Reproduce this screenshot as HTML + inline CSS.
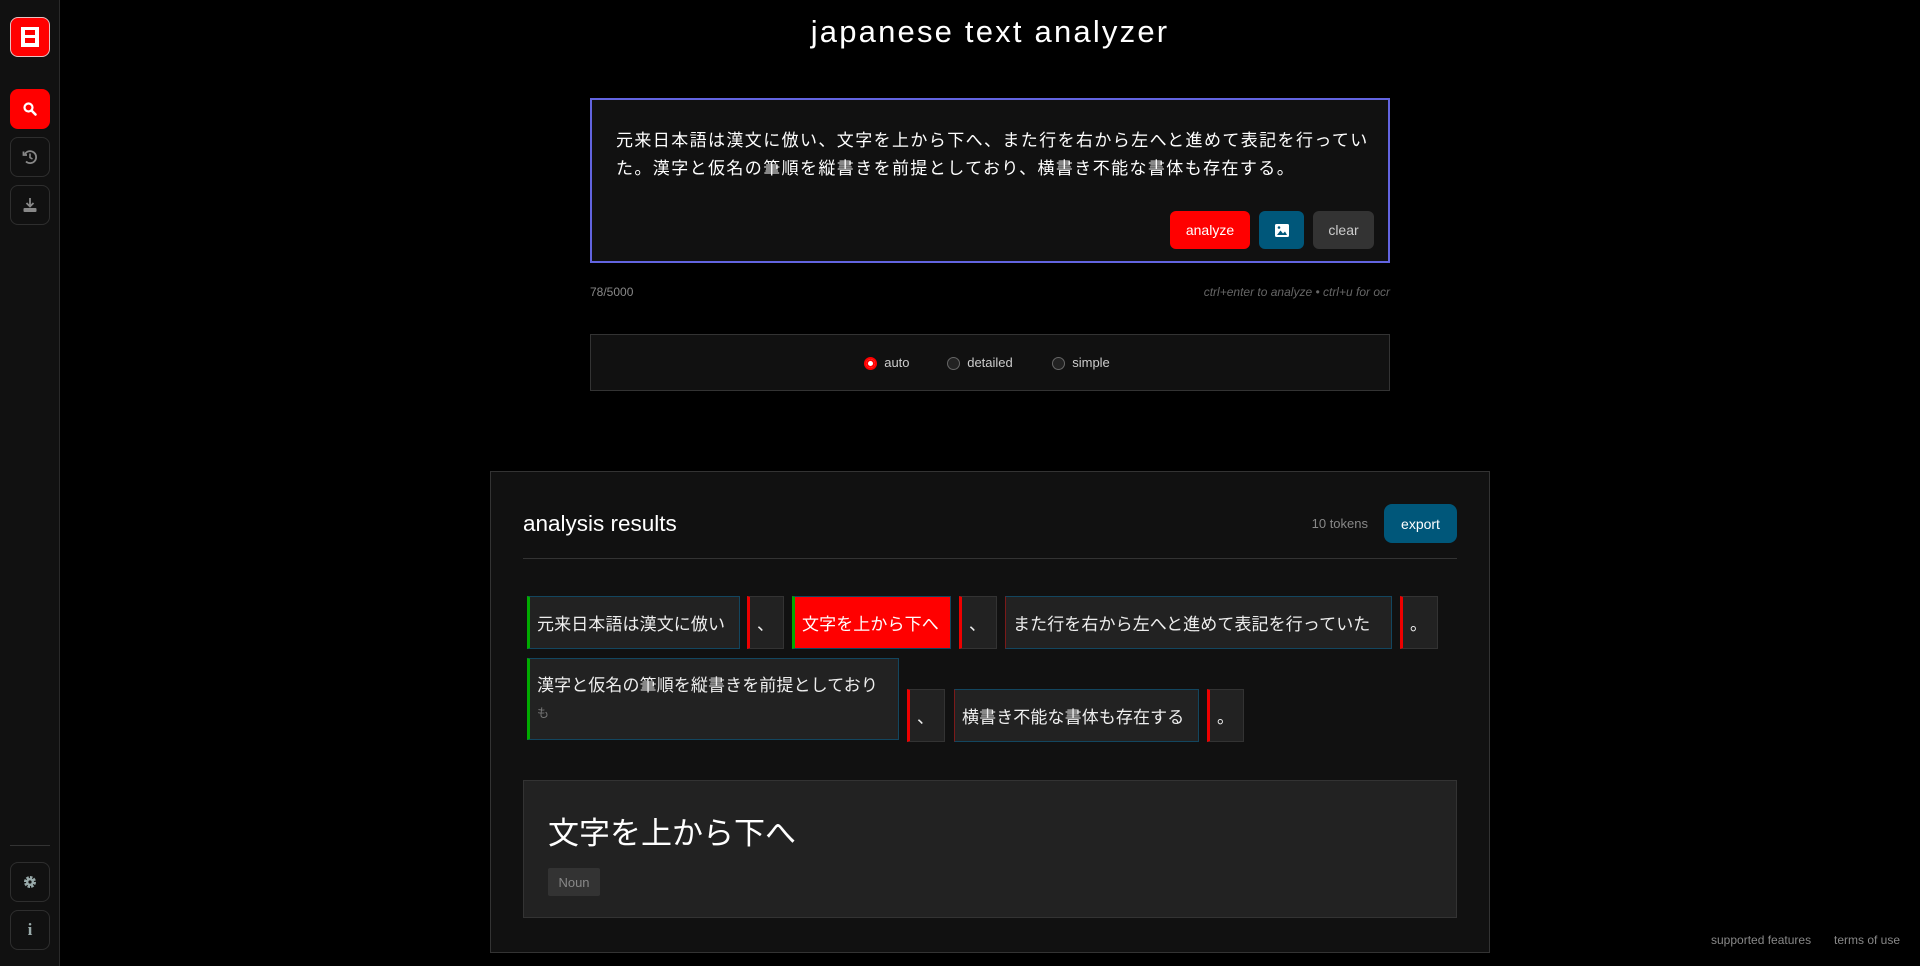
<!DOCTYPE html>
<html><head><meta charset="utf-8"><style>
*{box-sizing:border-box;margin:0;padding:0}
body{width:1920px;height:966px;background:#000;color:#fff;font-family:"Liberation Sans","Noto Sans CJK JP",sans-serif;position:relative;overflow:hidden}
.a{position:absolute}
.sb{left:0;top:0;width:60px;height:966px;background:#111;border-right:1px solid #2a2a2a}
.ib{position:absolute;left:10px;width:40px;height:40px;border:1px solid #2e2e2e;border-radius:8px;display:flex;align-items:center;justify-content:center}
.btn{position:absolute;border-radius:6px;display:flex;align-items:center;justify-content:center;font-size:14px;color:#fff}
.tk{position:absolute;background:#222;border:1px solid #13465f;border-left:3px solid #0a0;font-family:"Noto Sans CJK JP",sans-serif;font-size:17px;letter-spacing:0.1px;color:#eee;padding-left:7px;display:flex;align-items:center}
.p{border:1px solid #333;border-left:3px solid #e00}
.radio{display:inline-block;width:13px;height:13px;border-radius:50%;border:1px solid #666;background:#222;vertical-align:middle}
</style></head><body>
<div class="a sb">
 <div class="ib" style="top:17px;background:#f00;border:1px solid #e8c0c0">
  <svg width="24" height="24" viewBox="0 0 24 24"><rect x="3" y="2" width="18" height="20" fill="#fff"/><rect x="7" y="5" width="10" height="5" fill="#f00"/><rect x="7" y="13" width="10" height="5" fill="#f00"/></svg></div>
 <div class="ib" style="top:89px;background:#f00;border-color:#f00">
  <svg width="16" height="16" viewBox="0 0 16 16"><circle cx="6.5" cy="6.5" r="4" stroke="#fff" stroke-width="2.2" fill="none"/><path d="M9.5 9.5l4 4" stroke="#fff" stroke-width="2.6" stroke-linecap="round"/></svg></div>
 <div class="ib" style="top:137px">
  <svg width="16" height="16" viewBox="0 0 16 16"><path d="M3 5A6 6 0 1 1 4 12.5" stroke="#888" stroke-width="1.8" fill="none"/><path d="M1.5 2.5v3.5h3.5" stroke="#888" stroke-width="1.8" fill="none"/><path d="M8 4.5v4l2.5 1.5" stroke="#888" stroke-width="1.6" fill="none"/></svg></div>
 <div class="ib" style="top:185px">
  <svg width="16" height="16" viewBox="0 0 16 16"><path d="M8 1v8M4.5 6l3.5 3.5L11.5 6" stroke="#888" stroke-width="1.8" fill="none"/><rect x="1.5" y="11" width="13" height="4" rx="1" fill="#888"/></svg></div>
 <div class="a" style="left:10px;top:845px;width:40px;height:1px;background:#333"></div>
 <div class="ib" style="top:862px">
  <svg width="16" height="16" viewBox="0 0 16 16"><circle cx="8" cy="8" r="4.5" stroke="#9aa" stroke-width="3" fill="none" stroke-dasharray="2.4 1.1"/><circle cx="8" cy="8" r="4" fill="#9aa"/><circle cx="8" cy="8" r="1.6" fill="#111"/></svg></div>
 <div class="ib" style="top:910px;color:#9aa;font-family:'Liberation Serif',serif;font-size:17px;font-weight:bold">i</div>
</div>
<div class="a" style="left:60px;width:1860px;top:14px;text-align:center;font-size:31px;letter-spacing:2.2px;color:#fff">japanese text analyzer</div>

<div class="a" style="left:590px;top:98px;width:800px;height:165px;background:#111;border:2px solid #6264e0"></div>
<div class="a" style="left:616px;top:125px;width:762px;font-family:'Noto Sans CJK JP',sans-serif;font-size:17px;letter-spacing:1.4px;line-height:28px;color:#fff">元来日本語は漢文に倣い、文字を上から下へ、また行を右から左へと進めて表記を行っていた。漢字と仮名の筆順を縦書きを前提としており、横書き不能な書体も存在する。</div>
<div class="btn" style="left:1170px;top:211px;width:80px;height:38px;background:#f00">analyze</div>
<div class="btn" style="left:1259px;top:211px;width:45px;height:38px;background:#00577a">
 <svg width="14" height="13" viewBox="0 0 14 13"><rect x="0" y="0" width="14" height="13" rx="1.5" fill="#fff"/><path d="M2 11l3.5-4.5 2.5 3 2-2 2 3.5z" fill="#00577a"/><circle cx="4" cy="3.5" r="1.3" fill="#00577a"/></svg></div>
<div class="btn" style="left:1313px;top:211px;width:61px;height:38px;background:#333;color:#ccc">clear</div>
<div class="a" style="left:590px;top:285px;font-size:12px;color:#888">78/5000</div>
<div class="a" style="left:1000px;width:390px;top:285px;text-align:right;font-size:12px;color:#666;font-style:italic">ctrl+enter to analyze • ctrl+u for ocr</div>

<div class="a" style="left:590px;top:334px;width:800px;height:57px;background:#111;border:1px solid #333"></div>
<div class="a" style="left:864px;top:355px;font-size:13px;color:#ccc"><span class="radio" style="border:2px solid #f00;background:#fff;box-shadow:inset 0 0 0 2px #f00"></span>&nbsp; auto</div>
<div class="a" style="left:947px;top:355px;font-size:13px;color:#ccc"><span class="radio"></span>&nbsp; detailed</div>
<div class="a" style="left:1052px;top:355px;font-size:13px;color:#ccc"><span class="radio"></span>&nbsp; simple</div>

<div class="a" style="left:490px;top:471px;width:1000px;height:482px;background:#111;border:1px solid #333"></div>
<div class="a" style="left:523px;top:511px;font-size:22.5px;color:#fff">analysis results</div>
<div class="a" style="left:1250px;width:118px;top:516px;text-align:right;font-size:13px;color:#888">10 tokens</div>
<div class="btn" style="left:1384px;top:504px;width:73px;height:39px;background:#00577a;border-radius:8px">export</div>
<div class="a" style="left:523px;top:558px;width:934px;height:1px;background:#333"></div>

<div class="tk" style="left:527px;top:596px;width:213px;height:53px">元来日本語は漢文に倣い</div>
<div class="tk p" style="left:747px;top:596px;width:37px;height:53px">、</div>
<div class="tk" style="left:792px;top:596px;width:159px;height:53px;background:#f00;color:#fff">文字を上から下へ</div>
<div class="tk p" style="left:959px;top:596px;width:38px;height:53px">、</div>
<div class="tk" style="left:1005px;top:596px;width:387px;height:53px;border-left:1px solid #7a1a1a">また行を右から左へと進めて表記を行っていた</div>
<div class="tk p" style="left:1400px;top:596px;width:38px;height:53px">。</div>
<div class="tk" style="left:527px;top:658px;width:372px;height:82px;display:block;padding-top:12px">漢字と仮名の筆順を縦書きを前提としており<div style="font-size:12px;color:#777;margin-top:8px">も</div></div>
<div class="tk p" style="left:907px;top:689px;width:38px;height:53px">、</div>
<div class="tk" style="left:954px;top:689px;width:245px;height:53px;border-left:1px solid #7a1a1a">横書き不能な書体も存在する</div>
<div class="tk p" style="left:1207px;top:689px;width:37px;height:53px">。</div>

<div class="a" style="left:523px;top:780px;width:934px;height:138px;background:#222;border:1px solid #333"></div>
<div class="a" style="left:548px;top:808px;font-family:'Noto Sans CJK JP',sans-serif;font-size:31px;color:#fff">文字を上から下へ</div>
<div class="a" style="left:548px;top:868px;width:52px;height:28px;background:#333;border-radius:2px;color:#888;font-size:13px;display:flex;align-items:center;justify-content:center">Noun</div>

<div class="a" style="left:1711px;top:933px;font-size:12px;color:#888">supported features</div>
<div class="a" style="left:1834px;top:933px;font-size:12px;color:#888">terms of use</div>
</body></html>
